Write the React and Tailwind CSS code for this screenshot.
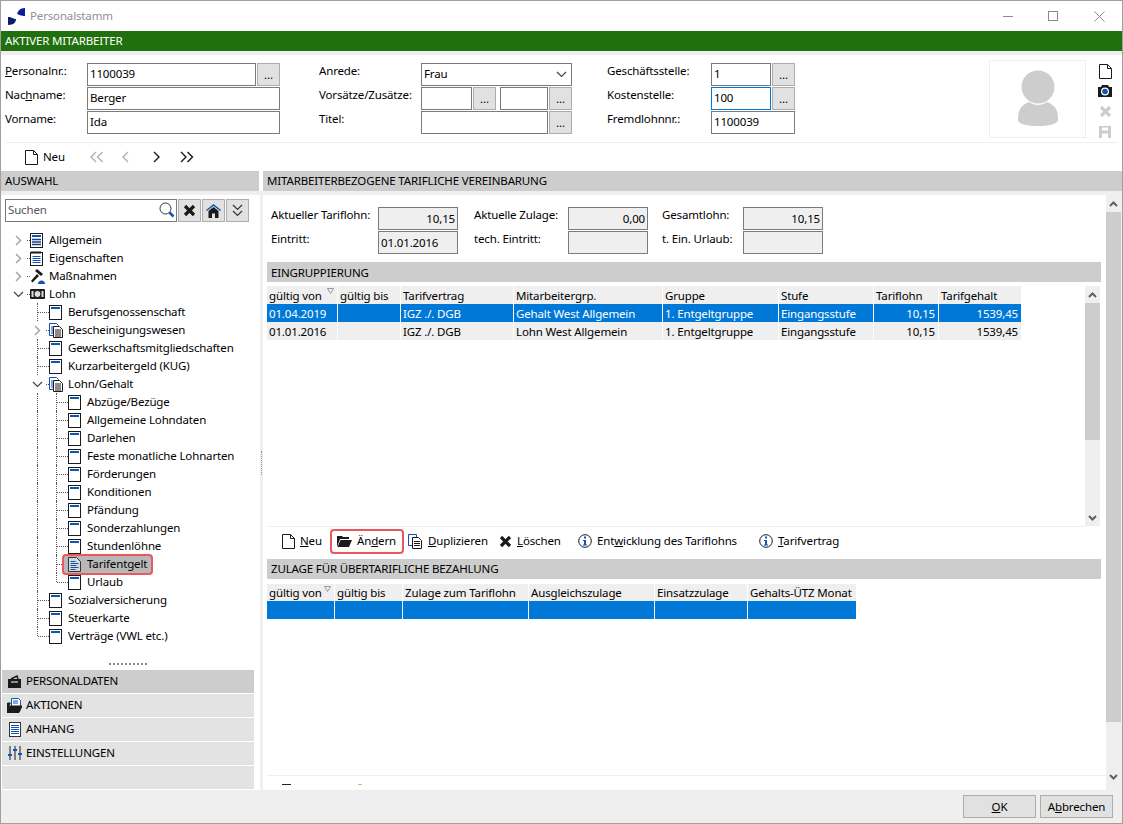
import React from 'react';

const PageIcon = () => (
  <svg width="13" height="15" viewBox="0 0 13 15" className="shrink-0">
    <rect x="0.5" y="0.5" width="12" height="14" fill="#fff" stroke="#1a1a1a" />
    <rect x="2" y="2" width="9" height="2" fill="#0f55b5" />
  </svg>
);

const DoublePage = () => (
  <svg width="15" height="15" viewBox="0 0 15 15" className="shrink-0">
    <path d="M.5 .5h7l2 2v10h-9z" fill="#fff" stroke="#0a4fc0" />
    <path d="M2 4h2M2 6h2M2 8h2M2 10h2" stroke="#0a4fc0" />
    <path d="M4.500 3.500h6l3 3v8h-9z" fill="#fff" stroke="#1a1a1a" />
    <path d="M6 7h6M6 9h6M6 11h6M6 13h6" stroke="#1a1a1a" />
  </svg>
);

const ServerIcon = () => (
  <svg width="13" height="15" viewBox="0 0 13 15" className="shrink-0">
    <rect x="0.5" y="0.5" width="12" height="14" fill="#fff" stroke="#1a1a1a" />
    <path d="M2 3h9" stroke="#0f55b5" strokeWidth="2" />
    <path d="M2 6.500h9M2 9h9M2 11.500h9" stroke="#1a3f7a" strokeWidth="1.500" />
  </svg>
);

const NoteIcon = () => (
  <svg width="13" height="15" viewBox="0 0 13 15" className="shrink-0">
    <rect x="0.5" y="1.5" width="12" height="13" fill="#fff" stroke="#1a1a1a" />
    <path d="M2 0v3M4 0v3M6 0v3M8 0v3M10 0v3" stroke="#1a1a1a" />
    <path d="M2.500 5.500h8M2.500 7.500h8M2.500 9.500h8M2.500 11.500h8" stroke="#0f55b5" />
  </svg>
);

const GavelIcon = () => (
  <svg width="15" height="15" viewBox="0 0 15 15" className="shrink-0">
    <path d="M7 0l6 5-2 2-6-5z" fill="#1a1a1a" />
    <path d="M7 5L1 12l1.500 1.500L9 7z" fill="#1a1a1a" />
    <path d="M8 15c0-2 1.500-3.500 3.500-3.500S15 13 15 15z" fill="#0f55b5" />
  </svg>
);

const MoneyIcon = () => (
  <svg width="15" height="10" viewBox="0 0 15 10" className="shrink-0">
    <rect x="0" y="0" width="15" height="10" rx="1" fill="#1a1a1a" />
    <circle cx="7.500" cy="5" r="3.500" fill="#ddd" stroke="#1a1a1a" />
    <rect x="1.500" y="2" width="2" height="6" fill="#ddd" />
    <rect x="11.500" y="2" width="2" height="6" fill="#ddd" />
  </svg>
);

const DocBlue = () => (
  <svg width="13" height="15" viewBox="0 0 13 15" className="shrink-0">
    <path d="M.5 .5h8l4 4v10H.5z" fill="#d8d8d8" stroke="#333" />
    <path d="M2.500 4.500h5M2.500 6.500h8M2.500 8.500h6M2.500 10.500h8M2.500 12.500h5" stroke="#0f55b5" />
  </svg>
);

const NewDoc = () => (
  <svg width="13" height="15" viewBox="0 0 13 15" className="shrink-0">
    <path d="M.5 .5h8l4 4v10H.5zM8.500 .5v4h4" fill="#fff" stroke="#1a1a1a" />
  </svg>
);

const FolderIcon = () => (
  <svg width="15" height="12" viewBox="0 0 15 12" className="shrink-0">
    <path d="M0 12V1h5l1 1h6v2H3z" fill="#1a1a1a" />
    <path d="M3.500 5H15l-3 7H.500z" fill="#1a1a1a" />
  </svg>
);

const CopyIcon = () => (
  <svg width="15" height="15" viewBox="0 0 15 15" className="shrink-0">
    <path d="M.5 .5h8v11h-8z" fill="#fff" stroke="#0f55b5" />
    <path d="M4.500 3.500h6l3 3v8h-9z" fill="#fff" stroke="#1a1a1a" />
    <path d="M6 7.500h6M6 9.500h6M6 11.500h6" stroke="#1a1a1a" />
  </svg>
);

const CrossIcon = ({ color = '#1a1a1a', size = 13 }) => (
  <svg width={size} height={size} viewBox="0 0 13 13" className="shrink-0">
    <path d="M2 2l9 9M11 2l-9 9" stroke={color} strokeWidth="3.200" />
  </svg>
);

const InfoIcon = () => (
  <svg width="14" height="14" viewBox="0 0 14 14" className="shrink-0">
    <circle cx="7" cy="7" r="6.300" fill="#fff" stroke="#1a1a1a" />
    <rect x="6" y="2.500" width="2" height="2" fill="#0f55b5" />
    <path d="M5 6h3v4.500h1.200V11.500H4.800v-1H6V7H5z" fill="#0f55b5" />
  </svg>
);

const ChevRight = ({ dark }) => (
  <svg width="7" height="11" viewBox="0 0 7 11">
    <path d="M1 1l4.500 4.500L1 10" fill="none" stroke={dark ? '#222' : '#a6a6a6'} strokeWidth="1.500" />
  </svg>
);

const ChevDown = () => (
  <svg width="11" height="7" viewBox="0 0 11 7">
    <path d="M1 1l4.500 4.500L10 1" fill="none" stroke="#444" strokeWidth="1.200" />
  </svg>
);

const NavArrows = ({ dir, double, dark }) => {
  const color = dark ? '#1a1a1a' : '#b0b0b0';
  const p = dir === 'l' ? 'M6 1L1 6l5 5' : 'M1 1l5 5-5 5';
  return (
    <svg width={double ? 14 : 7} height="12" viewBox={double ? '0 0 14 12' : '0 0 7 12'}>
      <path d={p} fill="none" stroke={color} strokeWidth="1.400" />
      {double && <path d={p} fill="none" stroke={color} strokeWidth="1.400" transform="translate(6.500 0)" />}
    </svg>
  );
};

const ScrollArrow = ({ down }) => (
  <svg width="9" height="6" viewBox="0 0 9 6">
    <path d={down ? 'M1 1l3.500 3.500L8 1' : 'M1 5l3.500-3.500L8 5'} fill="none" stroke="#606060" strokeWidth="2" />
  </svg>
);

const Dots = () => <div className="flex items-end justify-center h-[23px] w-[23px] shrink-0 bg-[#e1e1e1] border border-[#adadad] pb-[5px] leading-none">...</div>;

const Field = ({ children, className = '' }) => (
  <div className={`h-[23px] bg-white border border-[#7a7a7a] flex items-center pl-[2px] pb-px ${className}`}>{children}</div>
);

const ReadOnly = ({ children, right }) => (
  <div className={`w-[80px] h-[23px] bg-[#efefef] border border-[#7a7a7a] flex items-center px-[2px] ${right ? 'justify-end pr-[2px]' : ''}`}>{children}</div>
);

const Label = ({ children, className = '' }) => <div className={`h-[23px] whitespace-nowrap ${className}`}>{children}</div>;

const Bar = ({ children, className = '' }) => (
  <div className={`h-[20px] bg-[#cdcdcd] flex items-center pl-[4px] ${className}`}>{children}</div>
);

// one indent step of the tree, with its dotted guide
const Guide = ({ line, tick, chev }) => (
  <div className="relative w-[19px] h-full shrink-0">
    {line && <span className={`absolute left-[7px] top-0 border-l border-dotted border-[#555] ${line === 'half' ? 'h-[9px]' : 'h-full'}`} />}
    {tick && <span className="absolute left-[8px] right-0 top-[9px] border-t border-dotted border-[#555]" />}
    {chev && <span className="absolute left-0 top-0 w-[15px] h-full flex items-center justify-center bg-white">{chev}</span>}
  </div>
);

const tree = [
  { t: 'Allgemein', icon: <ServerIcon />, guides: [{ tick: true, chev: <ChevRight /> }] },
  { t: 'Eigenschaften', icon: <NoteIcon />, guides: [{ tick: true, chev: <ChevRight /> }] },
  { t: 'Maßnahmen', icon: <GavelIcon />, guides: [{ tick: true, chev: <ChevRight /> }] },
  { t: 'Lohn', icon: <MoneyIcon />, guides: [{ tick: true, chev: <ChevDown /> }] },
  { t: 'Berufsgenossenschaft', icon: <PageIcon />, guides: [{}, { line: true, tick: true }] },
  { t: 'Bescheinigungswesen', icon: <DoublePage />, guides: [{}, { line: true, tick: true, chev: <ChevRight /> }] },
  { t: 'Gewerkschaftsmitgliedschaften', icon: <PageIcon />, guides: [{}, { line: true, tick: true }] },
  { t: 'Kurzarbeitergeld (KUG)', icon: <PageIcon />, guides: [{}, { line: true, tick: true }] },
  { t: 'Lohn/Gehalt', icon: <DoublePage />, guides: [{}, { line: true, tick: true, chev: <ChevDown /> }] },
  ...['Abzüge/Bezüge', 'Allgemeine Lohndaten', 'Darlehen', 'Feste monatliche Lohnarten', 'Förderungen', 'Konditionen', 'Pfändung', 'Sonderzahlungen', 'Stundenlöhne'].map((t) => ({
    t,
    icon: <PageIcon />,
    guides: [{}, { line: true }, { line: true, tick: true }],
  })),
  { t: 'Tarifentgelt', icon: <DocBlue />, selected: true, guides: [{}, { line: true }, { line: true, tick: true }] },
  { t: 'Urlaub', icon: <PageIcon />, guides: [{}, { line: true }, { line: 'half', tick: true }] },
  { t: 'Sozialversicherung', icon: <PageIcon />, guides: [{}, { line: true, tick: true }] },
  { t: 'Steuerkarte', icon: <PageIcon />, guides: [{}, { line: true, tick: true }] },
  { t: 'Verträge (VWL etc.)', icon: <PageIcon />, guides: [{}, { line: 'half', tick: true }] },
];

const TreeRow = ({ row }) => (
  <div className="h-[18px] flex items-center pl-[10px]">
    {row.guides.map((g, i) => (
      <Guide key={i} {...g} />
    ))}
    <div className="relative flex items-center">
      {row.selected && <span className="absolute -left-[6px] -top-[2px] w-[91px] h-[21px] bg-[#b8b8b8] border-2 border-[#e8585c] rounded-[4px]" />}
      <span className="relative w-[19px] flex">{row.icon}</span>
      <span className="relative whitespace-nowrap">{row.t}</span>
    </div>
  </div>
);

const accordion = [
  {
    t: 'PERSONALDATEN',
    active: true,
    icon: (
      <svg width="13" height="13" viewBox="0 0 13 13">
        <path d="M0 4h13v9H0z" fill="#1a1a1a" />
        <path d="M3 4l6-3 1 3" fill="none" stroke="#1a1a1a" strokeWidth="1.500" />
        <path d="M3 7h7" stroke="#fff" />
      </svg>
    ),
  },
  {
    t: 'AKTIONEN',
    icon: (
      <svg width="15" height="15" viewBox="0 0 15 15">
        <path d="M4.500 .5h7l2 2v6h-9z" fill="#fff" stroke="#0f55b5" />
        <path d="M6 3h5M6 5h5" stroke="#0f55b5" />
        <path d="M.5 14V5h3M3 8h12l-3 6.500H0z" fill="#1a1a1a" stroke="#1a1a1a" />
      </svg>
    ),
  },
  {
    t: 'ANHANG',
    icon: (
      <svg width="12" height="15" viewBox="0 0 12 15">
        <rect x="0.500" y="0.500" width="11" height="14" fill="#fff" stroke="#333" />
        <path d="M2 3.500h8M2 5.500h8M2 7.500h8M2 9.500h8M2 11.500h8" stroke="#0f55b5" />
      </svg>
    ),
  },
  {
    t: 'EINSTELLUNGEN',
    icon: (
      <svg width="14" height="14" viewBox="0 0 14 14">
        <path d="M2 0v14M7 0v14M12 0v14" stroke="#1a1a1a" />
        <path d="M0 8h4v2H0zM5 3h4v2H5zM10 7h4v2h-4z" fill="#0f55b5" />
      </svg>
    ),
  },
];

const Scrollbar = ({ thumb, className = '' }) => (
  <div className={`w-[15px] shrink-0 bg-[#efefef] flex flex-col ${className}`}>
    <div className="h-[17px] flex items-center justify-center shrink-0"><ScrollArrow /></div>
    <div className={`bg-[#cdcdcd] shrink-0 ${thumb}`} />
    <div className="flex-1" />
    <div className="h-[17px] flex items-center justify-center shrink-0"><ScrollArrow down /></div>
  </div>
);

const SortMark = () => (
  <svg width="7" height="6" viewBox="0 0 7 6" className="absolute right-[3px] top-[2px]">
    <path d="M.5 .5h6L3.500 5.500z" fill="none" stroke="#9a9a9a" />
  </svg>
);

const cols1 = 'grid grid-cols-[71px_63px_113px_149px_116px_95px_65px_83px]';
const cols2 = 'grid grid-cols-[68px_68px_126px_126px_93px_109px]';
const head1 = ['gültig von', 'gültig bis', 'Tarifvertrag', 'Mitarbeitergrp.', 'Gruppe', 'Stufe', 'Tariflohn', 'Tarifgehalt'];
const head2 = ['gültig von', 'gültig bis', 'Zulage zum Tariflohn', 'Ausgleichszulage', 'Einsatzzulage', 'Gehalts-ÜTZ Monat'];
const rows1 = [
  ['01.04.2019', '', 'IGZ ./. DGB', 'Gehalt West Allgemein', '1. Entgeltgruppe', 'Eingangsstufe', '10,15', '1539,45'],
  ['01.01.2016', '', 'IGZ ./. DGB', 'Lohn West Allgemein', '1. Entgeltgruppe', 'Eingangsstufe', '10,15', '1539,45'],
];

const Cell = ({ children, right, className = '' }) => (
  <div className={`relative border-r border-white pl-[2px] pt-px whitespace-nowrap flex items-center overflow-hidden ${right ? 'justify-end pr-[3px]' : ''} ${className}`}>{children}</div>
);

const ToolBtn = ({ icon, children, className = '' }) => (
  <div className={`flex items-center gap-[5px] shrink-0 ${className}`}>
    {icon}
    <span>{children}</span>
  </div>
);

export default function App() {
  return (
    <div className="w-[1123px] h-[824px] overflow-hidden bg-[#efefef] border border-[#a0a0a0] flex flex-col text-[11.5px] leading-[16px] tracking-[-0.15px] text-black [font-family:'Noto_Sans',sans-serif]">
      {/* title bar */}
      <div className="h-[30px] shrink-0 bg-white flex items-center pl-[7px]">
        <svg width="17" height="17" viewBox="0 0 17 17" className="mr-[5px]">
          <path d="M0 17V9c4 0 5 2 8 2 0 3-2 6-8 6z" fill="#0a1f6b" />
          <path d="M17 0v8c-4 0-5-1-8-2 1-3 3-6 8-6z" fill="#0a1f9b" />
        </svg>
        <span className="text-[#8f8f8f]">Personalstamm</span>
        <div className="ml-auto flex items-center mr-[17px] gap-[35px]">
          <span className="w-[10px] h-px bg-[#8a8a8a]" />
          <span className="w-[10px] h-[10px] border border-[#8a8a8a]" />
          <svg width="11" height="11" viewBox="0 0 11 11" className="ml-px"><path d="M.5 .5l10 10M10.500 .5l-10 10" stroke="#8a8a8a" /></svg>
        </div>
      </div>

      <div className="h-[20px] shrink-0 bg-[#217010] text-white flex items-center pl-[4px]">AKTIVER MITARBEITER</div>
      <div className="h-[4px] shrink-0" />

      {/* employee form */}
      <div className="h-[87px] shrink-0 bg-white px-[4px] flex">
        <div className="flex pt-[8px]">
          <div className="w-[82px] flex flex-col gap-px">
            <Label><u>P</u>ersonalnr.:</Label>
            <Label>Nac<u>h</u>name:</Label>
            <Label>Vorname:</Label>
          </div>
          <div className="w-[193px] flex flex-col gap-px">
            <div className="flex gap-px">
              <Field className="flex-1">1100039</Field>
              <Dots />
            </div>
            <Field>Berger</Field>
            <Field>Ida</Field>
          </div>
        </div>
        <div className="flex pt-[8px] ml-[39px]">
          <div className="w-[102px] flex flex-col gap-px">
            <Label>Anrede:</Label>
            <Label>Vorsätze/Zusätze:</Label>
            <Label>Titel:</Label>
          </div>
          <div className="w-[151px] flex flex-col gap-px">
            <Field className="justify-between pr-[4px]">Frau <ChevDown /></Field>
            <div className="flex">
              <Field className="w-[51px]" />
              <div className="ml-px"><Dots /></div>
              <Field className="w-[48px] ml-[4px]" />
              <div className="ml-px"><Dots /></div>
            </div>
            <div className="flex gap-px">
              <Field className="flex-1" />
              <Dots />
            </div>
          </div>
        </div>
        <div className="flex pt-[8px] ml-[35px]">
          <div className="w-[104px] flex flex-col gap-px">
            <Label>Geschäftsstelle:</Label>
            <Label>Kostenstelle:</Label>
            <Label>Fremdlohnnr.:</Label>
          </div>
          <div className="w-[84px] flex flex-col gap-px">
            <div className="flex gap-px">
              <Field className="flex-1">1</Field>
              <Dots />
            </div>
            <div className="flex gap-px">
              <Field className="flex-1 border-[#0078d7]">100</Field>
              <Dots />
            </div>
            <Field>1100039</Field>
          </div>
        </div>
        <div className="ml-[194px] mt-[5px] w-[97px] h-[78px] border border-[#efefef] flex items-center justify-center">
          <svg width="42" height="58" viewBox="0 0 42 58">
            <circle cx="21" cy="17" r="16.500" fill="#cdcdcd" />
            <path d="M1 50c0-8 1-14 11-18 3 2 6 3 9 3s6-1 9-3c10 4 11 10 11 18 0 4-10 6-20 6S1 54 1 50z" fill="#cdcdcd" />
          </svg>
        </div>
        <div className="ml-[12px] mt-[9px] w-[14px] flex flex-col items-center gap-[6px]">
          <NewDoc />
          <svg width="14" height="12" viewBox="0 0 14 12">
            <path d="M0 2h3l1-2h6l1 2h3v10H0z" fill="#1a1a1a" />
            <circle cx="7" cy="6.500" r="4" fill="#fff" />
            <circle cx="7" cy="6.500" r="2.800" fill="#0f55b5" />
          </svg>
          <div className="mt-[2px]"><CrossIcon color="#cdcdcd" /></div>
          <svg width="12" height="12" viewBox="0 0 12 12" className="mt-[2px]">
            <path d="M0 0h12v12H0z" fill="#cdcdcd" />
            <path d="M3 1.500h6v3H3zM3 7.500h6V12H3z" fill="#fff" />
          </svg>
        </div>
      </div>

      {/* record toolbar */}
      <div className="h-[29px] shrink-0 bg-white flex flex-col">
        <div className="h-px mx-[4px] bg-[#efefef] shrink-0" />
        <div className="flex-1 flex items-center pl-[24px]">
          <ToolBtn className="w-[65px]" icon={<NewDoc />}>Neu</ToolBtn>
          <NavArrows dir="l" double />
          <div className="ml-[18px]"><NavArrows dir="l" /></div>
          <div className="ml-[24px]"><NavArrows dir="r" dark /></div>
          <div className="ml-[20px]"><NavArrows dir="r" double dark /></div>
        </div>
      </div>

      {/* section headings */}
      <div className="h-[20px] shrink-0 bg-white flex">
        <Bar className="w-[258px]">AUSWAHL</Bar>
        <Bar className="ml-[4px] flex-1">MITARBEITERBEZOGENE TARIFLICHE VEREINBARUNG</Bar>
      </div>
      <div className="h-[4px] shrink-0" />

      <div className="flex-1 flex min-h-0">
        {/* left panel */}
        <div className="w-[259px] shrink-0 bg-white flex flex-col">
          <div className="flex mt-[4px] ml-[4px] gap-px">
            <div className="w-[172px] h-[23px] border border-[#7a7a7a] flex items-center justify-between pl-[2px] pr-[1px] pb-px text-[#555]">
              Suchen
              <svg width="16" height="16" viewBox="0 0 16 16">
                <circle cx="6.500" cy="6.500" r="5.500" fill="#fff" stroke="#333" />
                <path d="M10.500 10.500l4 4" stroke="#0f55b5" strokeWidth="2.500" />
              </svg>
            </div>
            <div className="w-[23px] h-[23px] bg-[#e1e1e1] border border-[#adadad] flex items-center justify-center"><CrossIcon /></div>
            <div className="w-[23px] h-[23px] bg-[#e1e1e1] border border-[#adadad] flex items-center justify-center">
              <svg width="15" height="14" viewBox="0 0 15 14">
                <path d="M.5 6.500L7.500 1l7 5.500" fill="none" stroke="#0f55b5" strokeWidth="1.500" />
                <path d="M2.500 7L7.500 3l5 4v7H9V9.500H6V14H2.500z" fill="#1a1a1a" />
              </svg>
            </div>
            <div className="w-[23px] h-[23px] bg-[#e1e1e1] border border-[#adadad] flex items-center justify-center">
              <svg width="11" height="14" viewBox="0 0 11 14">
                <path d="M1 1l4.500 4.500L10 1M1 7l4.500 4.500L10 7" fill="none" stroke="#333" strokeWidth="1.200" />
              </svg>
            </div>
          </div>
          <div className="mt-[9px]">
            {tree.map((row) => (
              <TreeRow key={row.t} row={row} />
            ))}
          </div>
          <div className="mt-auto flex justify-center w-[252px] ml-px mb-[5px] text-[0px]">
            <div className="w-[38px] border-t-2 border-dotted border-[#888]" />
          </div>
          <div className="ml-px w-[252px] flex flex-col gap-px">
            {accordion.map((a) => (
              <div key={a.t} className={`h-[23px] flex items-center pb-px ${a.active ? 'bg-[#cdcdcd]' : 'bg-[#e3e3e3]'}`}>
                <span className="w-[24px] flex justify-center pl-[1px]">{a.icon}</span>
                {a.t}
              </div>
            ))}
            <div className="h-[23px] bg-[#e3e3e3]" />
          </div>
          <div className="h-px" />
        </div>

        {/* splitter */}
        <div className="w-[3px] shrink-0 flex items-center justify-center pb-[60px]">
          <div className="w-px h-[24px] border-l border-dotted border-[#999]" />
        </div>

        {/* right panel */}
        <div className="w-[843px] shrink-0 bg-white px-[4px] flex flex-col">
          <div className="pt-[12px] flex pl-[4px]">
            <div className="w-[107px] flex flex-col gap-px">
              <Label>Aktueller Tariflohn:</Label>
              <Label>Eintritt:</Label>
            </div>
            <div className="w-[80px] flex flex-col gap-px">
              <ReadOnly right>10,15</ReadOnly>
              <ReadOnly>01.01.2016</ReadOnly>
            </div>
            <div className="w-[94px] ml-[16px] flex flex-col gap-px">
              <Label>Aktuelle Zulage:</Label>
              <Label>tech. Eintritt:</Label>
            </div>
            <div className="w-[80px] flex flex-col gap-px">
              <ReadOnly right>0,00</ReadOnly>
              <ReadOnly />
            </div>
            <div className="w-[81px] ml-[14px] flex flex-col gap-px">
              <Label>Gesamtlohn:</Label>
              <Label>t. Ein. Urlaub:</Label>
            </div>
            <div className="w-[80px] flex flex-col gap-px">
              <ReadOnly right>10,15</ReadOnly>
              <ReadOnly />
            </div>
          </div>

          <Bar className="mt-[8px] shrink-0 pt-px mr-px">EINGRUPPIERUNG</Bar>

          <div className="mt-[4px] h-[240px] shrink-0 flex">
            <div className="w-[818px]">
              <div className={`${cols1} w-[755px] h-[18px] bg-[#efefef]`}>
                {head1.map((h, i) => (
                  <Cell key={h} className="border-[#e0e0e0]">{h}{i === 0 && <SortMark />}</Cell>
                ))}
              </div>
              {rows1.map((r, ri) => (
                <div key={ri} className={`${cols1} w-[755px] h-[18px] ${ri === 0 ? 'bg-[#0078d7] text-white' : 'bg-[#efefef]'}`}>
                  {r.map((c, i) => (
                    <Cell key={i} right={i > 5}>{c}</Cell>
                  ))}
                </div>
              ))}
            </div>
            <Scrollbar thumb="h-[137px]" />
          </div>

          <div className="h-px w-[818px] bg-[#efefef] shrink-0" />

          <div className="h-[32px] shrink-0 flex items-center pl-[15px] pb-[4px]">
            <ToolBtn className="w-[55px]" icon={<NewDoc />}><u>N</u>eu</ToolBtn>
            <div className="relative w-[71px] flex items-center">
              <span className="absolute -left-[7px] -top-[4px] w-[74px] h-[25px] border-2 border-[#e8585c] rounded-[4px]" />
              <ToolBtn icon={<FolderIcon />}>Än<u>d</u>ern</ToolBtn>
            </div>
            <ToolBtn className="w-[91px]" icon={<CopyIcon />}><u>D</u>uplizieren</ToolBtn>
            <ToolBtn className="w-[79px]" icon={<CrossIcon />}><u>L</u>öschen</ToolBtn>
            <ToolBtn className="w-[181px]" icon={<InfoIcon />}>Ent<u>w</u>icklung des Tariflohns</ToolBtn>
            <ToolBtn icon={<InfoIcon />}><u>T</u>arifvertrag</ToolBtn>
          </div>

          <Bar className="shrink-0 mr-px">ZULAGE FÜR ÜBERTARIFLICHE BEZAHLUNG</Bar>

          <div className={`${cols2} w-[590px] h-[17px] bg-[#efefef] mt-[5px] shrink-0`}>
            {head2.map((h, i) => (
              <Cell key={h} className="border-[#e0e0e0]">{h}{i === 0 && <SortMark />}</Cell>
            ))}
          </div>
          <div className={`${cols2} w-[590px] h-[18px] bg-[#0078d7] shrink-0`}>
            {head2.map((h) => (
              <Cell key={h} />
            ))}
          </div>

          <div className="flex-1" />
          <div className="h-px w-[839px] bg-[#efefef] shrink-0" />
          <div className="h-[14px] shrink-0 flex pt-[8px] pl-[15px]">
            <span className="w-[9px] h-px bg-[#222]" />
            <span className="w-[4px] h-px ml-[67px] bg-[#e8b070]" />
          </div>
        </div>

        {/* page scrollbar */}
        <Scrollbar thumb="h-[510px]" className="h-[590px]" />
      </div>

      {/* dialog buttons */}
      <div className="h-[33px] shrink-0 flex items-start justify-end pt-[5px] pr-[9px] gap-[4px]">
        <div className="w-[73px] h-[23px] bg-[#e1e1e1] border border-[#adadad] flex items-center justify-center"><span><u>O</u>K</span></div>
        <div className="w-[73px] h-[23px] bg-[#e1e1e1] border border-[#adadad] flex items-center justify-center"><span>A<u>b</u>brechen</span></div>
      </div>
    </div>
  );
}
